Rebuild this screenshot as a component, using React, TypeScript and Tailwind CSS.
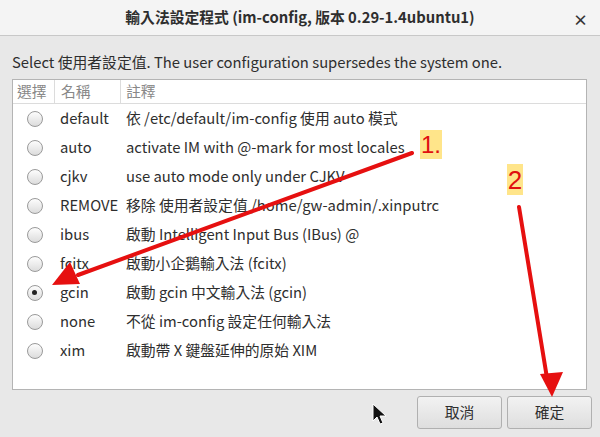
const rows = [
  { name: 'default', note: '依 /etc/default/im-config 使用 auto 模式' },
  { name: 'auto', note: 'activate IM with @-mark for most locales' },
  { name: 'cjkv', note: 'use auto mode only under CJKV' },
  { name: 'REMOVE', note: '移除 使用者設定值 /home/gw-admin/.xinputrc' },
  { name: 'ibus', note: '啟動 Intelligent Input Bus (IBus) @' },
  { name: 'fcitx', note: '啟動小企鵝輸入法 (fcitx)' },
  { name: 'gcin', note: '啟動 gcin 中文輸入法 (gcin)', checked: true },
  { name: 'none', note: '不從 im-config 設定任何輸入法' },
  { name: 'xim', note: '啟動帶 X 鍵盤延伸的原始 XIM' },
];

function Radio({ checked }: { checked?: boolean }) {
  return (
    <span className="flex h-[16px] w-[16px] items-center justify-center rounded-full border border-[#9a9a9a] bg-gradient-to-b from-[#fdfdfd] to-[#dcdcdc] shadow-[0_1px_0_rgba(255,255,255,0.8)]">
      {checked && <span className="h-[5px] w-[5px] rounded-full bg-[#222]" />}
    </span>
  );
}

export default function App() {
  return (
    <div
      className="relative flex h-[437px] w-[600px] flex-col overflow-hidden bg-[#e8e8e8] text-[#2e2e2e]"
      style={{ fontFamily: '"Noto Sans CJK TC", "Noto Sans", sans-serif' }}
    >
      {/* Title bar */}
      <div className="relative flex h-[36px] shrink-0 items-center justify-center border-b border-[#c8c8c8] bg-[#f4f4f4]">
        <span className="text-[14.8px] font-bold text-[#2e2e2e]">輸入法設定程式 (im-config, 版本 0.29-1.4ubuntu1)</span>
        <span className="absolute right-[12px] top-[9px] text-[15px] font-bold text-[#333]">×</span>
      </div>

      <div className="flex flex-1 flex-col pb-[8px] pl-[12px] pr-[8px]">
        <div className="flex h-[43px] items-center pt-[9px] text-[14.8px]">
          Select 使用者設定值. The user configuration supersedes the system one.
        </div>

        {/* List */}
        <div className="mr-[5px] flex h-[311px] flex-col border border-[#b4b4b4] bg-white">
          <div className="flex h-[24px] shrink-0 items-center border-b border-[#dcdcdc] text-[14.8px] text-[#888]">
            <div className="flex h-full w-[42px] items-center border-r border-[#dcdcdc] pl-[4px]">選擇</div>
            <div className="flex h-full w-[66px] items-center border-r border-[#dcdcdc] pl-[6px]">名稱</div>
            <div className="pl-[5px]">註釋</div>
          </div>
          {rows.map((r) => (
            <div key={r.name} className="flex h-[29px] shrink-0 items-center text-[14.8px] text-[#2e2e2e]">
              <div className="flex w-[42px] justify-center pl-[1px]">
                <Radio checked={r.checked} />
              </div>
              <div className="w-[66px] pl-[5px]">{r.name}</div>
              <div className="pl-[5px]">{r.note}</div>
            </div>
          ))}
        </div>

        {/* Buttons */}
        <div className="mt-[6px] flex justify-end gap-[5px]">
          <button className="h-[33px] w-[85px] rounded-[3px] border border-[#b0b0b0] bg-gradient-to-b from-[#f2f2f2] to-[#dedede] text-[14.8px] text-[#2e2e2e]">
            取消
          </button>
          <button className="h-[33px] w-[85px] rounded-[3px] border border-[#b0b0b0] bg-gradient-to-b from-[#f2f2f2] to-[#dedede] text-[14.8px] text-[#2e2e2e]">
            確定
          </button>
        </div>
      </div>

      {/* Annotation labels */}
      <span
        className="absolute left-[420px] top-[130px] flex h-[29px] w-[22px] items-center justify-center bg-[#ffe58a] text-[24px] leading-none text-[#e01010]"
        style={{ fontFamily: '"Liberation Sans", sans-serif' }}
      >
        1.
      </span>
      <span
        className="absolute left-[507px] top-[164px] flex h-[31px] w-[16px] items-center justify-center bg-[#ffe58a] text-[26px] leading-none text-[#e01010]"
        style={{ fontFamily: '"Liberation Sans", sans-serif' }}
      >
        2
      </span>

      {/* Annotation arrows and cursor */}
      <svg className="pointer-events-none absolute left-0 top-0" width="600" height="437">
        <line x1="412" y1="153" x2="78" y2="275" stroke="#e61010" strokeWidth="4" strokeLinecap="round" />
        <polygon points="52,285 70,262 80,284" fill="#e61010" />
        <line x1="519" y1="207" x2="547" y2="378" stroke="#e61010" strokeWidth="4" strokeLinecap="round" />
        <polygon points="552,397 540,374 563,372" fill="#e61010" />
        <path d="M373,404 L373,421 L377,417 L380,424 L383,423 L380,416 L386,416 Z" fill="#111" stroke="#fff" strokeWidth="1" />
      </svg>
    </div>
  );
}
